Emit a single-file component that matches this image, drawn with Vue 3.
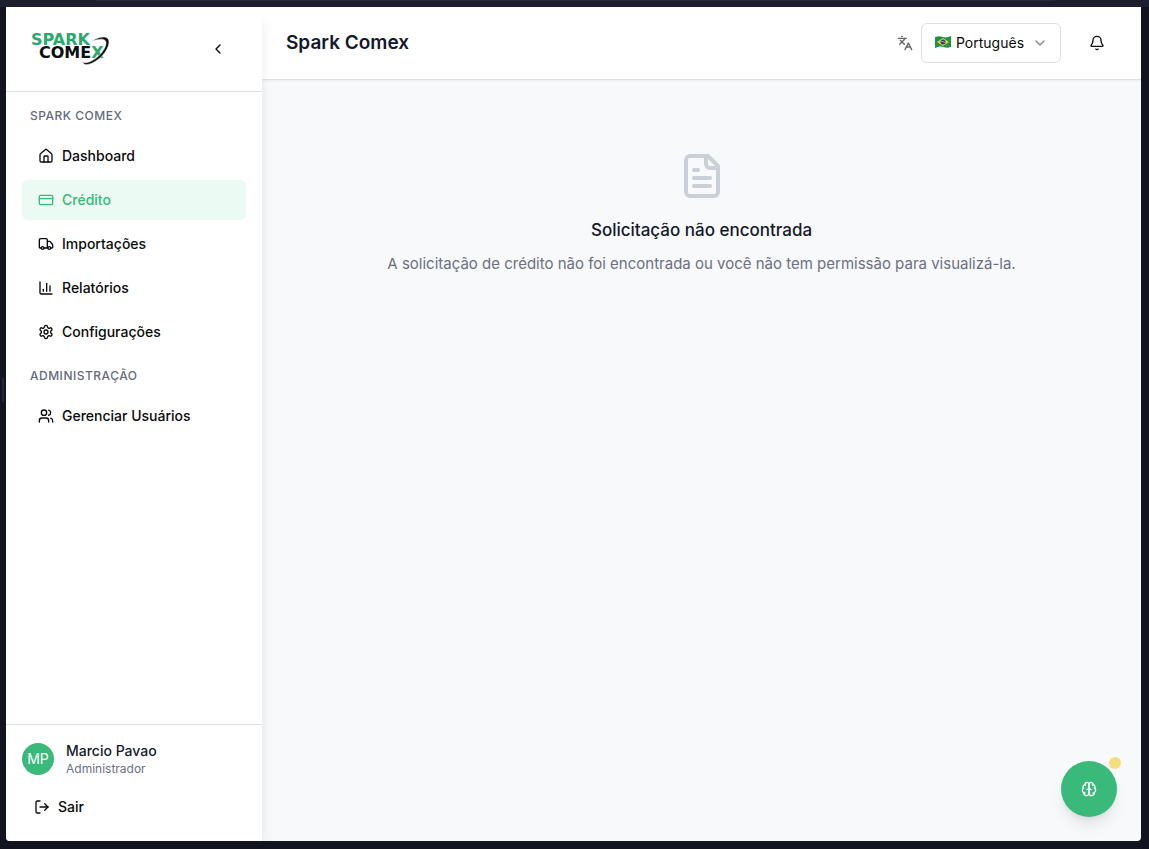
<script setup>
import { ref } from 'vue'

const language = ref('pt')

const icons = {
  home: '<path d="M15 21v-8a1 1 0 0 0-1-1h-4a1 1 0 0 0-1 1v8"/><path d="M3 10a2 2 0 0 1 .709-1.528l7-5.999a2 2 0 0 1 2.582 0l7 5.999A2 2 0 0 1 21 10v9a2 2 0 0 1-2 2H5a2 2 0 0 1-2-2z"/>',
  card: '<rect width="20" height="14" x="2" y="5" rx="2"/><path d="M2 10h20"/>',
  truck: '<path d="M14 18V6a2 2 0 0 0-2-2H4a2 2 0 0 0-2 2v11a1 1 0 0 0 1 1h2"/><path d="M15 18H9"/><path d="M19 18h2a1 1 0 0 0 1-1v-3.65a1 1 0 0 0-.22-.624l-3.48-4.35A1 1 0 0 0 17.52 8H14"/><circle cx="17" cy="18" r="2"/><circle cx="7" cy="18" r="2"/>',
  chart: '<path d="M3 3v16a2 2 0 0 0 2 2h16"/><path d="M18 17V9"/><path d="M13 17V5"/><path d="M8 17v-3"/>',
  settings: '<path d="M12.22 2h-.44a2 2 0 0 0-2 2v.18a2 2 0 0 1-1 1.73l-.43.25a2 2 0 0 1-2 0l-.15-.08a2 2 0 0 0-2.73.73l-.22.38a2 2 0 0 0 .73 2.73l.15.1a2 2 0 0 1 1 1.72v.51a2 2 0 0 1-1 1.74l-.15.09a2 2 0 0 0-.73 2.73l.22.38a2 2 0 0 0 2.73.73l.15-.08a2 2 0 0 1 2 0l.43.25a2 2 0 0 1 1 1.73V20a2 2 0 0 0 2 2h.44a2 2 0 0 0 2-2v-.18a2 2 0 0 1 1-1.73l.43-.25a2 2 0 0 1 2 0l.15.08a2 2 0 0 0 2.73-.73l.22-.39a2 2 0 0 0-.73-2.73l-.15-.08a2 2 0 0 1-1-1.74v-.5a2 2 0 0 1 1-1.74l.15-.09a2 2 0 0 0 .73-2.73l-.22-.38a2 2 0 0 0-2.73-.73l-.15.08a2 2 0 0 1-2 0l-.43-.25a2 2 0 0 1-1-1.73V4a2 2 0 0 0-2-2z"/><circle cx="12" cy="12" r="3"/>',
  users: '<path d="M16 21v-2a4 4 0 0 0-4-4H6a4 4 0 0 0-4 4v2"/><circle cx="9" cy="7" r="4"/><path d="M22 21v-2a4 4 0 0 0-3-3.87"/><path d="M16 3.13a4 4 0 0 1 0 7.75"/>',
}

const sections = [
  {
    label: 'SPARK COMEX',
    items: [
      { text: 'Dashboard', icon: icons.home },
      { text: 'Crédito', icon: icons.card, active: true },
      { text: 'Importações', icon: icons.truck },
      { text: 'Relatórios', icon: icons.chart },
      { text: 'Configurações', icon: icons.settings },
    ],
  },
  {
    label: 'ADMINISTRAÇÃO',
    items: [{ text: 'Gerenciar Usuários', icon: icons.users }],
  },
]
</script>

<template>
  <div class="frame">
    <span class="tab-line"></span>
    <span class="grip"></span>
    <div class="window">
      <aside class="sidebar">
        <div class="brand">
          <svg class="logo" width="84" height="36" viewBox="0 0 84 36" role="img" aria-label="Spark Comex">
            <g class="logo-text">
              <text x="1" y="14" fill="#2aa96b">SPARK</text>
              <text x="9" y="27" fill="#0c0f0e">COME<tspan fill="#2aa96b">X</tspan></text>
            </g>
            <path d="M62 10C70 5 79 4 79 11C79 19 69 31 58 33.500C55 34 53 33 52.500 30.500C54 32 56 32 59 31C68 28 76 18 76 12C76 7 70 7.500 62 10Z" fill="#0c0f0e" stroke="#fff" stroke-width="0.500" />
          </svg>
          <button class="collapse" type="button" aria-label="Recolher menu">
            <svg class="icon" viewBox="0 0 24 24"><path d="m15 18-6-6 6-6" /></svg>
          </button>
        </div>

        <nav class="nav">
          <template v-for="section in sections" :key="section.label">
            <h2 class="nav-label">{{ section.label }}</h2>
            <a
              v-for="item in section.items"
              :key="item.text"
              href="#"
              class="nav-item"
              :class="{ active: item.active }"
            >
              <svg class="icon" viewBox="0 0 24 24" v-html="item.icon"></svg>
              <span>{{ item.text }}</span>
            </a>
          </template>
        </nav>

        <div class="account">
          <div class="profile">
            <span class="avatar">MP</span>
            <div>
              <div class="name">Marcio Pavao</div>
              <div class="role">Administrador</div>
            </div>
          </div>
          <button class="logout" type="button">
            <svg class="icon" viewBox="0 0 24 24"><path d="M9 21H5a2 2 0 0 1-2-2V5a2 2 0 0 1 2-2h4" /><path d="m16 17 5-5-5-5" /><path d="M21 12H9" /></svg>
            <span>Sair</span>
          </button>
        </div>
      </aside>

      <div class="content">
        <header class="topbar">
          <h1 class="page-title">Spark Comex</h1>
          <div class="tools">
            <div class="language">
              <svg class="icon muted" viewBox="0 0 24 24"><path d="m5 8 6 6" /><path d="m4 14 6-6 2-3" /><path d="M2 5h12" /><path d="M7 2h1" /><path d="m22 22-5-10-5 10" /><path d="M14 18h6" /></svg>
              <div class="select-box">
                <select v-model="language" aria-label="Idioma">
                  <option value="pt">Português</option>
                </select>
                <svg class="flag" width="16" height="12" viewBox="0 0 16 12" aria-hidden="true">
                  <path d="M0 1C3 0 5 0 8 1S13 1 16 0V11C13 12 11 12 8 11S3 11 0 12Z" fill="#229145" />
                  <path d="M2 6 8 2l6 4-6 4Z" fill="#f3d02f" />
                  <circle cx="8" cy="6" r="2.500" fill="#283f91" />
                  <path d="M6 5.500q2-.5 4 1" fill="none" stroke="#d6def0" stroke-width="0.600" />
                </svg>
                <svg class="icon chevron" viewBox="0 0 24 24"><path d="m6 9 6 6 6-6" /></svg>
              </div>
            </div>
            <button class="bell" type="button" aria-label="Notificações">
              <svg class="icon" viewBox="0 0 24 24"><path d="M10.268 21a2 2 0 0 0 3.464 0" /><path d="M3.262 15.326A1 1 0 0 0 4 17h16a1 1 0 0 0 .74-1.673C19.410 13.956 18 12.499 18 8A6 6 0 0 0 6 8c0 4.499-1.411 5.956-2.738 7.326" /></svg>
            </button>
          </div>
        </header>

        <main class="empty">
          <svg class="file" viewBox="0 0 24 24"><path d="M15 2H6a2 2 0 0 0-2 2v16a2 2 0 0 0 2 2h12a2 2 0 0 0 2-2V7Z" /><path d="M14 2v4a2 2 0 0 0 2 2h4" /><path d="M10 9H8" /><path d="M16 13H8" /><path d="M16 17H8" /></svg>
          <h3>Solicitação não encontrada</h3>
          <p>A solicitação de crédito não foi encontrada ou você não tem permissão para visualizá-la.</p>
        </main>
      </div>

      <button class="assistant" type="button" aria-label="Assistente">
        <svg class="icon" viewBox="0 0 24 24"><path d="M12 5a3 3 0 1 0-5.997.125 4 4 0 0 0-2.526 5.770 4 4 0 0 0 .556 6.588A4 4 0 1 0 12 18Z" /><path d="M12 5a3 3 0 1 1 5.997.125 4 4 0 0 1 2.526 5.770 4 4 0 0 1-.556 6.588A4 4 0 1 1 12 18Z" /><path d="M15 13a4.500 4.500 0 0 1-3-4 4.500 4.500 0 0 1-3 4" /><path d="M17.599 6.500a3 3 0 0 0 .399-1.375" /><path d="M6.003 5.125A3 3 0 0 0 6.401 6.500" /><path d="M3.477 10.896a4 4 0 0 1 .585-.396" /><path d="M19.938 10.500a4 4 0 0 1 .585.396" /><path d="M6 18a4 4 0 0 1-1.967-.516" /><path d="M19.967 17.484A4 4 0 0 1 18 18" /></svg>
        <span class="dot"></span>
      </button>
    </div>
  </div>
</template>

<style>
body {
  background: #11131f;
}
</style>

<style scoped>
* {
  box-sizing: border-box;
}

.frame {
  position: relative;
  display: flex;
  min-height: 100vh;
  padding: 7px 8px 8px 6px;
  background: linear-gradient(#1c1e2d 7px, #11131f 7px);
  font-family: Inter, "Liberation Sans", sans-serif;
  font-size: 14px;
  line-height: 20px;
  color: #0a0a0a;
}

.tab-line {
  position: absolute;
  top: 0;
  left: 96px;
  right: 94px;
  height: 1px;
  background: #292b3d;
}

.grip {
  position: absolute;
  top: 378px;
  left: 2px;
  width: 2px;
  height: 24px;
  background: #25273a;
}

.window {
  position: relative;
  display: flex;
  flex: 1;
  min-width: 0;
  overflow: hidden;
  border-radius: 0 0 4px 4px;
  background: #f8f9fb;
}

h1,
h2,
h3,
p {
  margin: 0;
}

button {
  padding: 0;
  border: 0;
  background: none;
  color: inherit;
  font: inherit;
  cursor: pointer;
}

.icon {
  display: block;
  flex: none;
  width: 16px;
  height: 16px;
  fill: none;
  stroke: currentColor;
  stroke-width: 2;
  stroke-linecap: round;
  stroke-linejoin: round;
}

.sidebar {
  position: relative;
  z-index: 1;
  display: flex;
  flex: none;
  flex-direction: column;
  width: 256px;
  background: #fff;
  box-shadow: 0 10px 15px -3px rgba(0, 0, 0, 0.1), 0 4px 6px -4px rgba(0, 0, 0, 0.1);
}

.brand {
  display: flex;
  align-items: center;
  justify-content: space-between;
  height: 85px;
  padding: 0 24px;
  border-bottom: 1px solid #dedfe1;
}

.logo {
  display: block;
}

.logo-text {
  font-family: "DejaVu Sans", sans-serif;
  font-size: 16px;
  font-weight: 700;
}

.collapse {
  display: grid;
  place-items: center;
  width: 40px;
  height: 36px;
}

.nav {
  display: flex;
  flex: 1;
  flex-direction: column;
  gap: 4px;
  padding: 4px 16px;
}

.nav-label {
  height: 36px;
  padding: 12px 8px 8px;
  color: #646a7b;
  font-size: 12px;
  font-weight: 500;
  line-height: 16px;
  letter-spacing: 0.5px;
}

.nav-item {
  display: flex;
  align-items: center;
  gap: 8px;
  height: 40px;
  padding: 0 16px;
  border-radius: 6px;
  color: inherit;
  font-weight: 500;
  text-decoration: none;
}

.nav-item.active {
  background: #ebfaf3;
  color: #39b878;
}

.account {
  padding: 16px;
  border-top: 1px solid #dedfe1;
}

.profile {
  display: flex;
  align-items: center;
  gap: 12px;
  margin-bottom: 12px;
}

.avatar {
  display: grid;
  place-items: center;
  width: 32px;
  height: 32px;
  border-radius: 50%;
  background: #39b97a;
  color: #fff;
}

.name {
  color: #15182a;
  font-weight: 500;
}

.role {
  color: #6b7080;
  font-size: 12px;
  line-height: 16px;
}

.logout {
  display: flex;
  align-items: center;
  gap: 8px;
  width: 100%;
  height: 36px;
  padding: 0 12px;
  font-weight: 500;
}

.content {
  display: flex;
  flex: 1;
  flex-direction: column;
  min-width: 0;
}

.topbar {
  display: flex;
  align-items: center;
  justify-content: space-between;
  height: 73px;
  padding: 0 24px;
  border-bottom: 1px solid #dedfe1;
  background: #fff;
  box-shadow: 0 1px 2px rgba(0, 0, 0, 0.05);
}

.page-title {
  color: #15182a;
  font-size: 19px;
  font-weight: 600;
  line-height: 28px;
}

.tools {
  display: flex;
  align-items: center;
  gap: 16px;
}

.language {
  display: flex;
  align-items: center;
  gap: 8px;
}

.muted {
  color: #666;
}

.select-box {
  position: relative;
  width: 140px;
}

.select-box select {
  display: block;
  appearance: none;
  width: 100%;
  height: 40px;
  padding: 0 34px;
  border: 1px solid #dedfe1;
  border-radius: 6px;
  background: #fff;
  color: inherit;
  font: inherit;
}

.flag,
.chevron {
  position: absolute;
  pointer-events: none;
}

.flag {
  top: 13px;
  left: 14px;
}

.chevron {
  top: 12px;
  right: 13px;
  color: #858585;
}

.bell {
  display: grid;
  place-items: center;
  width: 40px;
  height: 40px;
}

.empty {
  display: flex;
  flex-direction: column;
  align-items: center;
  padding: 72px 24px;
  text-align: center;
}

.file {
  width: 48px;
  height: 48px;
  margin-bottom: 16px;
  fill: none;
  stroke: #cad0d8;
  stroke-width: 2;
  stroke-linecap: round;
  stroke-linejoin: round;
}

.empty h3 {
  margin-bottom: 8px;
  color: #15182a;
  font-size: 17px;
  font-weight: 500;
  line-height: 28px;
}

.empty p {
  color: #6b7080;
  font-size: 15px;
  line-height: 24px;
}

.assistant {
  position: absolute;
  right: 24px;
  bottom: 24px;
  display: grid;
  place-items: center;
  width: 56px;
  height: 56px;
  border-radius: 50%;
  background: #39b97a;
  color: #fff;
  box-shadow: 0 10px 15px -3px rgba(0, 0, 0, 0.1), 0 4px 6px -4px rgba(0, 0, 0, 0.1);
}

.dot {
  position: absolute;
  top: -4px;
  right: -4px;
  width: 12px;
  height: 12px;
  border-radius: 50%;
  background: #f4dd7c;
}
</style>
